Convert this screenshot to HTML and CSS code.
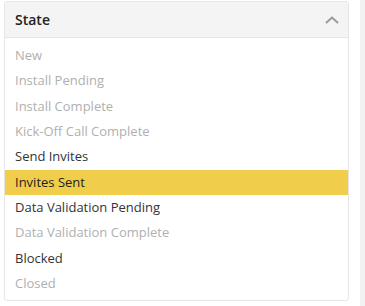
FILE: index.html
```html
<!DOCTYPE html>
<html lang="en">
<head>
  <meta charset="UTF-8" />
  <meta name="viewport" content="width=device-width, initial-scale=1.0" />
  <title>State</title>
  <link rel="stylesheet" href="styles.css">
</head>
<body>
  <div class="page">
    <div class="panel">
      <div class="panel-header">
        <span class="panel-title">State</span>
        <svg class="chevron" width="14" height="8" viewBox="0 0 14 8">
          <polyline points="1,7 7,1.5 13,7" fill="none" stroke="#9a9a9a" stroke-width="2" />
        </svg>
      </div>
      <ul class="state-list">
        <li class="disabled">New</li>
        <li class="disabled">Install Pending</li>
        <li class="disabled">Install Complete</li>
        <li class="disabled">Kick-Off Call Complete</li>
        <li>Send Invites</li>
        <li class="selected">Invites Sent</li>
        <li>Data Validation Pending</li>
        <li class="disabled">Data Validation Complete</li>
        <li>Blocked</li>
        <li class="disabled">Closed</li>
      </ul>
    </div>
    <div class="side"></div>
  </div>
</body>
</html>
```

FILE: styles.css
```css
body {
  margin: 0;
  font-family: "Open Sans", Arial, sans-serif;
  background-color: #fff;
  color: #333;
}
.page {
  display: flex;
  height: 306px;
}
.panel {
  width: 345px;
  height: 300px;
  margin: 1px 0 0 4px;
  border: 1px solid #e6e6e6;
  border-radius: 3px;
  box-sizing: border-box;
  overflow: hidden;
}
.panel-header {
  display: flex;
  align-items: center;
  justify-content: space-between;
  height: 36px;
  padding: 0 9px 0 10px;
  background-color: #f3f4f3;
  border-bottom: 1px solid #e6e6e6;
  box-sizing: border-box;
}
.panel-title {
  font-size: 14px;
  font-weight: 600;
  color: #222;
}
.chevron {
  display: block;
  margin-top: 1px;
}
.state-list {
  list-style: none;
  margin: 0;
  padding: 5px 0;
}
.state-list li {
  height: 25.33px;
  line-height: 25.33px;
  padding: 0 10px;
  font-size: 13px;
  color: #333;
}
.state-list li.disabled {
  color: #b0b0b0;
}
.state-list li.selected {
  background-color: #f0cd4b;
  color: #1e1e1e;
}
.side {
  width: 5px;
  margin-left: 11px;
  background-color: #f2f2f2;
}
```
